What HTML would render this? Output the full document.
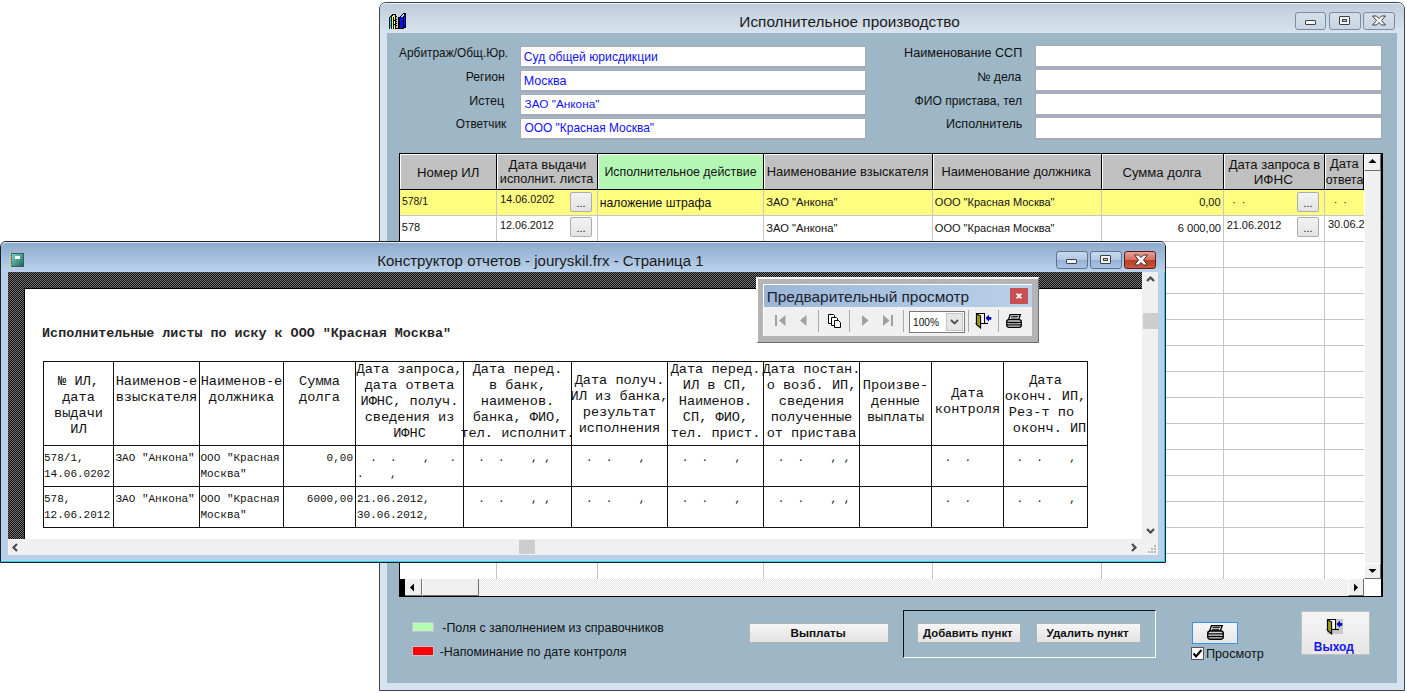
<!DOCTYPE html><html><head><meta charset="utf-8"><style>*{margin:0;padding:0;box-sizing:border-box}
html,body{width:1407px;height:693px;overflow:hidden;background:#fff;font-family:"Liberation Sans",sans-serif;position:relative}
.a{position:absolute}
.t{position:absolute;white-space:nowrap}
.hatch{background:repeating-conic-gradient(#0a0a0a 0 25%,#787878 0 50%) 0 0/2px 2px}
</style></head><body>
<div class="a" style="left:379px;top:2px;width:1026px;height:689px;border:1px solid #3d4650;border-radius:7px 7px 0 0;background:#d3dfeb;"></div>
<div class="a" style="left:380px;top:3px;width:1024px;height:30px;border-radius:6px 6px 0 0;background:linear-gradient(#bfcedc,#d7e3ee);border-top:1px solid #e6edf4;"></div>
<div class="a" style="left:380px;top:33px;width:1024px;height:657px;background:#d6e3ef;"></div>
<div class="a" style="left:387px;top:33px;width:1010px;height:650px;background:#9db7c6;"></div>
<svg class="a" style="left:388px;top:12px" width="18" height="18" viewBox="0 0 18 18" shape-rendering="crispEdges"><rect x="1" y="5" width="1" height="12" fill="#000"/><rect x="2" y="5" width="1" height="11" fill="#00e8ff"/><rect x="3" y="4" width="1" height="13" fill="#000"/><rect x="4" y="4" width="1" height="12" fill="#ffff00"/><rect x="5" y="3" width="1" height="2" fill="#ffff00"/><rect x="2" y="4" width="1" height="1" fill="#000"/><rect x="3" y="3" width="2" height="1" fill="#000"/><rect x="4" y="2" width="2" height="1" fill="#000"/><rect x="5" y="5" width="1" height="12" fill="#000"/><rect x="6" y="2" width="2" height="1" fill="#000"/><rect x="6" y="5" width="1" height="11" fill="#e8e8e8"/><rect x="6" y="8" width="1" height="1" fill="#000"/><rect x="6" y="12" width="1" height="1" fill="#000"/><rect x="7" y="3" width="1" height="14" fill="#000"/><rect x="8" y="4" width="1" height="1" fill="#000"/><rect x="8" y="5" width="2" height="11" fill="#c8c8c8"/><rect x="8" y="7" width="1" height="1" fill="#000"/><rect x="8" y="9" width="1" height="1" fill="#000"/><rect x="8" y="11" width="1" height="1" fill="#000"/><rect x="8" y="13" width="1" height="1" fill="#000"/><rect x="10" y="5" width="1" height="12" fill="#000"/><rect x="8" y="16" width="3" height="1" fill="#000"/><rect x="11" y="5" width="1" height="12" fill="#000"/><rect x="12" y="5" width="3" height="11" fill="#0010f0"/><rect x="12" y="4" width="1" height="1" fill="#000"/><rect x="13" y="3" width="1" height="1" fill="#000"/><rect x="14" y="2" width="1" height="1" fill="#000"/><rect x="15" y="1" width="1" height="1" fill="#000"/><rect x="13" y="4" width="3" height="1" fill="#d8d8d8"/><rect x="14" y="3" width="2" height="1" fill="#d8d8d8"/><rect x="15" y="4" width="1" height="12" fill="#000"/><rect x="16" y="2" width="1" height="13" fill="#0010f0"/><rect x="17" y="1" width="1" height="15" fill="#000"/><rect x="16" y="1" width="1" height="1" fill="#000"/><rect x="11" y="16" width="5" height="1" fill="#000"/><rect x="15" y="15" width="2" height="1" fill="#000"/></svg>
<div class="t" style="left:739.37px;top:14.23px;font-family:'Liberation Sans',sans-serif;font-size:15.37px;color:#1b1b1b;font-weight:normal;line-height:1;">Исполнительное производство</div>
<div class="a" style="left:1295px;top:12px;width:31px;height:18px;border:1px solid #7d8ba0;border-radius:3px;background:linear-gradient(#d4dfe9,#c8d6e3);"></div>
<div class="a" style="left:1329px;top:12px;width:32px;height:18px;border:1px solid #7d8ba0;border-radius:3px;background:linear-gradient(#d4dfe9,#c8d6e3);"></div>
<div class="a" style="left:1363px;top:12px;width:32px;height:18px;border:1px solid #7d8ba0;border-radius:3px;background:linear-gradient(#d4dfe9,#c8d6e3);"></div>
<div class="a" style="left:1305px;top:20px;width:11px;height:5px;background:#f4f4f0;border:1px solid #3a3f48;border-radius:1px;"></div>
<div class="a" style="left:1339px;top:16px;width:11px;height:9px;background:#f4f4f0;border:1px solid #3a3f48;border-radius:1px;"></div>
<div class="a" style="left:1342px;top:19px;width:5px;height:3px;background:#c8d4e0;border:1px solid #3a3f48;"></div>
<svg class="a" style="left:1371px;top:15px" width="16" height="11" viewBox="0 0 16 11"><path d="M1.5 1 L5.5 1 L8 3.5 L10.5 1 L14.5 1 L10.5 5.5 L14.5 10 L10.5 10 L8 7.5 L5.5 10 L1.5 10 L5.5 5.5Z" fill="#f4f4f0" stroke="#3a3f48" stroke-width="1"/></svg>
<div class="a" style="left:520px;top:46px;width:346px;height:22px;background:#fff;border:1px solid #aaa8b4;border-bottom-width:2px;"></div>
<div class="t" style="left:399.00px;top:48.47px;font-family:'Liberation Sans',sans-serif;font-size:11.92px;color:#111;font-weight:normal;line-height:1;">Арбитраж/Общ.Юр.</div>
<div class="t" style="left:523.79px;top:50.96px;font-family:'Liberation Sans',sans-serif;font-size:12.17px;color:#1212f5;font-weight:normal;line-height:1;">Суд общей юрисдикции</div>
<div class="a" style="left:520px;top:70px;width:346px;height:22px;background:#fff;border:1px solid #aaa8b4;border-bottom-width:2px;"></div>
<div class="t" style="left:465.72px;top:71.14px;font-family:'Liberation Sans',sans-serif;font-size:12.19px;color:#111;font-weight:normal;line-height:1;">Регион</div>
<div class="t" style="left:523.70px;top:74.66px;font-family:'Liberation Sans',sans-serif;font-size:12.52px;color:#1212f5;font-weight:normal;line-height:1;">Москва</div>
<div class="a" style="left:520px;top:94px;width:346px;height:22px;background:#fff;border:1px solid #aaa8b4;border-bottom-width:2px;"></div>
<div class="t" style="left:469.20px;top:95.39px;font-family:'Liberation Sans',sans-serif;font-size:12.48px;color:#111;font-weight:normal;line-height:1;">Истец</div>
<div class="t" style="left:524.55px;top:99.37px;font-family:'Liberation Sans',sans-serif;font-size:11.80px;color:#1212f5;font-weight:normal;line-height:1;">ЗАО "Анкона"</div>
<div class="a" style="left:520px;top:118px;width:346px;height:22px;background:#fff;border:1px solid #aaa8b4;border-bottom-width:2px;"></div>
<div class="t" style="left:455.83px;top:119.22px;font-family:'Liberation Sans',sans-serif;font-size:11.85px;color:#111;font-weight:normal;line-height:1;">Ответчик</div>
<div class="t" style="left:524.42px;top:123.15px;font-family:'Liberation Sans',sans-serif;font-size:11.94px;color:#1212f5;font-weight:normal;line-height:1;">ООО "Красная Москва"</div>
<div class="a" style="left:1035px;top:45px;width:347px;height:23px;background:#fff;border:1px solid #aaa8b4;border-bottom-width:2px;"></div>
<div class="t" style="left:904.09px;top:46.78px;font-family:'Liberation Sans',sans-serif;font-size:12.61px;color:#111;font-weight:normal;line-height:1;">Наименование ССП</div>
<div class="a" style="left:1035px;top:69px;width:347px;height:23px;background:#fff;border:1px solid #aaa8b4;border-bottom-width:2px;"></div>
<div class="t" style="left:977.30px;top:70.91px;font-family:'Liberation Sans',sans-serif;font-size:12.22px;color:#111;font-weight:normal;line-height:1;">№ дела</div>
<div class="a" style="left:1035px;top:93px;width:347px;height:23px;background:#fff;border:1px solid #aaa8b4;border-bottom-width:2px;"></div>
<div class="t" style="left:914.59px;top:94.81px;font-family:'Liberation Sans',sans-serif;font-size:12.10px;color:#111;font-weight:normal;line-height:1;">ФИО пристава, тел</div>
<div class="a" style="left:1035px;top:117px;width:347px;height:23px;background:#fff;border:1px solid #aaa8b4;border-bottom-width:2px;"></div>
<div class="t" style="left:945.99px;top:118.07px;font-family:'Liberation Sans',sans-serif;font-size:12.62px;color:#111;font-weight:normal;line-height:1;">Исполнитель</div>
<div class="a" style="left:399px;top:153px;width:984px;height:444px;background:#000;"></div>
<div class="a" style="left:400px;top:154px;width:981px;height:442px;background:#fff;"></div>
<div class="a" style="left:400px;top:190px;width:964px;height:25px;background:#fffd80;"></div>
<div class="a" style="left:400px;top:215px;width:964px;height:1px;background:#c6c6c6;"></div>
<div class="a" style="left:400px;top:241px;width:964px;height:1px;background:#c6c6c6;"></div>
<div class="a" style="left:400px;top:267px;width:964px;height:1px;background:#c6c6c6;"></div>
<div class="a" style="left:400px;top:293px;width:964px;height:1px;background:#c6c6c6;"></div>
<div class="a" style="left:400px;top:319px;width:964px;height:1px;background:#c6c6c6;"></div>
<div class="a" style="left:400px;top:345px;width:964px;height:1px;background:#c6c6c6;"></div>
<div class="a" style="left:400px;top:371px;width:964px;height:1px;background:#c6c6c6;"></div>
<div class="a" style="left:400px;top:397px;width:964px;height:1px;background:#c6c6c6;"></div>
<div class="a" style="left:400px;top:423px;width:964px;height:1px;background:#c6c6c6;"></div>
<div class="a" style="left:400px;top:449px;width:964px;height:1px;background:#c6c6c6;"></div>
<div class="a" style="left:400px;top:475px;width:964px;height:1px;background:#c6c6c6;"></div>
<div class="a" style="left:400px;top:501px;width:964px;height:1px;background:#c6c6c6;"></div>
<div class="a" style="left:400px;top:527px;width:964px;height:1px;background:#c6c6c6;"></div>
<div class="a" style="left:400px;top:553px;width:964px;height:1px;background:#c6c6c6;"></div>
<div class="a" style="left:496px;top:190px;width:1px;height:389px;background:#c6c6c6;"></div>
<div class="a" style="left:597px;top:190px;width:1px;height:389px;background:#c6c6c6;"></div>
<div class="a" style="left:763px;top:190px;width:1px;height:389px;background:#c6c6c6;"></div>
<div class="a" style="left:932px;top:190px;width:1px;height:389px;background:#c6c6c6;"></div>
<div class="a" style="left:1101px;top:190px;width:1px;height:389px;background:#c6c6c6;"></div>
<div class="a" style="left:1223px;top:190px;width:1px;height:389px;background:#c6c6c6;"></div>
<div class="a" style="left:1324px;top:190px;width:1px;height:389px;background:#c6c6c6;"></div>
<div class="a" style="left:400px;top:154px;width:96px;height:35px;background:#c0c0c0;border-top:1px solid #fff;border-left:1px solid #fff;"></div>
<div class="a" style="left:496px;top:154px;width:1px;height:35px;background:#000;"></div>
<div class="a" style="left:497px;top:154px;width:100px;height:35px;background:#c0c0c0;border-top:1px solid #fff;border-left:1px solid #fff;"></div>
<div class="a" style="left:597px;top:154px;width:1px;height:35px;background:#000;"></div>
<div class="a" style="left:598px;top:154px;width:165px;height:35px;background:#b4f7b4;border-top:1px solid #fff;border-left:1px solid #fff;"></div>
<div class="a" style="left:763px;top:154px;width:1px;height:35px;background:#000;"></div>
<div class="a" style="left:764px;top:154px;width:168px;height:35px;background:#c0c0c0;border-top:1px solid #fff;border-left:1px solid #fff;"></div>
<div class="a" style="left:932px;top:154px;width:1px;height:35px;background:#000;"></div>
<div class="a" style="left:933px;top:154px;width:168px;height:35px;background:#c0c0c0;border-top:1px solid #fff;border-left:1px solid #fff;"></div>
<div class="a" style="left:1101px;top:154px;width:1px;height:35px;background:#000;"></div>
<div class="a" style="left:1102px;top:154px;width:121px;height:35px;background:#c0c0c0;border-top:1px solid #fff;border-left:1px solid #fff;"></div>
<div class="a" style="left:1223px;top:154px;width:1px;height:35px;background:#000;"></div>
<div class="a" style="left:1224px;top:154px;width:100px;height:35px;background:#c0c0c0;border-top:1px solid #fff;border-left:1px solid #fff;"></div>
<div class="a" style="left:1324px;top:154px;width:1px;height:35px;background:#000;"></div>
<div class="a" style="left:1325px;top:154px;width:38px;height:35px;background:#c0c0c0;border-top:1px solid #fff;border-left:1px solid #fff;"></div>
<div class="a" style="left:1363px;top:154px;width:1px;height:35px;background:#000;"></div>
<div class="a" style="left:400px;top:189px;width:964px;height:1px;background:#000;"></div>
<div class="t" style="left:417.05px;top:165.61px;font-family:'Liberation Sans',sans-serif;font-size:13.16px;color:#111;font-weight:normal;line-height:1;">Номер ИЛ</div>
<div class="t" style="left:508.50px;top:157.65px;font-family:'Liberation Sans',sans-serif;font-size:13.12px;color:#111;font-weight:normal;line-height:1;">Дата выдачи</div>
<div class="t" style="left:499.84px;top:172.51px;font-family:'Liberation Sans',sans-serif;font-size:12.69px;color:#111;font-weight:normal;line-height:1;">исполнит. листа</div>
<div class="t" style="left:604.41px;top:166.29px;font-family:'Liberation Sans',sans-serif;font-size:12.36px;color:#111;font-weight:normal;line-height:1;">Исполнительное действие</div>
<div class="t" style="left:766.76px;top:165.79px;font-family:'Liberation Sans',sans-serif;font-size:12.95px;color:#111;font-weight:normal;line-height:1;">Наименование взыскателя</div>
<div class="t" style="left:941.48px;top:166.15px;font-family:'Liberation Sans',sans-serif;font-size:12.77px;color:#111;font-weight:normal;line-height:1;">Наименование должника</div>
<div class="t" style="left:1122.44px;top:166.04px;font-family:'Liberation Sans',sans-serif;font-size:13.12px;color:#111;font-weight:normal;line-height:1;">Сумма долга</div>
<div class="t" style="left:1228.80px;top:157.64px;font-family:'Liberation Sans',sans-serif;font-size:13.01px;color:#111;font-weight:normal;line-height:1;">Дата запроса в</div>
<div class="t" style="left:1253.73px;top:172.90px;font-family:'Liberation Sans',sans-serif;font-size:13.41px;color:#111;font-weight:normal;line-height:1;">ИФНС</div>
<div class="t" style="left:1330.10px;top:157.74px;font-family:'Liberation Sans',sans-serif;font-size:12.89px;color:#111;font-weight:normal;line-height:1;">Дата</div>
<div class="t" style="left:1325.70px;top:173.77px;font-family:'Liberation Sans',sans-serif;font-size:12.39px;color:#111;font-weight:normal;line-height:1;">ответа</div>
<div class="t" style="left:401.88px;top:197.30px;font-family:'Liberation Sans',sans-serif;font-size:10.47px;color:#111;font-weight:normal;line-height:1;">578/1</div>
<div class="t" style="left:500.25px;top:194.04px;font-family:'Liberation Sans',sans-serif;font-size:10.78px;color:#111;font-weight:normal;line-height:1;">14.06.0202</div>
<div class="t" style="left:599.77px;top:196.85px;font-family:'Liberation Sans',sans-serif;font-size:12.18px;color:#111;font-weight:normal;line-height:1;">наложение штрафа</div>
<div class="t" style="left:766.26px;top:196.97px;font-family:'Liberation Sans',sans-serif;font-size:11.21px;color:#111;font-weight:normal;line-height:1;">ЗАО "Анкона"</div>
<div class="t" style="left:934.86px;top:196.93px;font-family:'Liberation Sans',sans-serif;font-size:11.03px;color:#111;font-weight:normal;line-height:1;">ООО "Красная Москва"</div>
<div class="t" style="left:1199.17px;top:196.94px;font-family:'Liberation Sans',sans-serif;font-size:11.01px;color:#111;font-weight:normal;line-height:1;">0,00</div>
<div class="t" style="left:1232.2px;top:196.65px;font-family:'Liberation Sans',sans-serif;font-size:11px;color:#111;font-weight:normal;line-height:1;">·</div>
<div class="t" style="left:1241.8px;top:196.65px;font-family:'Liberation Sans',sans-serif;font-size:11px;color:#111;font-weight:normal;line-height:1;">·</div>
<div class="t" style="left:1333.7px;top:196.65px;font-family:'Liberation Sans',sans-serif;font-size:11px;color:#111;font-weight:normal;line-height:1;">·</div>
<div class="t" style="left:1343.3px;top:196.65px;font-family:'Liberation Sans',sans-serif;font-size:11px;color:#111;font-weight:normal;line-height:1;">·</div>
<div class="t" style="left:401.76px;top:222.40px;font-family:'Liberation Sans',sans-serif;font-size:11.05px;color:#111;font-weight:normal;line-height:1;">578</div>
<div class="t" style="left:499.95px;top:219.54px;font-family:'Liberation Sans',sans-serif;font-size:10.78px;color:#111;font-weight:normal;line-height:1;">12.06.2012</div>
<div class="t" style="left:766.26px;top:222.97px;font-family:'Liberation Sans',sans-serif;font-size:11.21px;color:#111;font-weight:normal;line-height:1;">ЗАО "Анкона"</div>
<div class="t" style="left:934.86px;top:222.93px;font-family:'Liberation Sans',sans-serif;font-size:11.03px;color:#111;font-weight:normal;line-height:1;">ООО "Красная Москва"</div>
<div class="t" style="left:1177.64px;top:222.81px;font-family:'Liberation Sans',sans-serif;font-size:11.17px;color:#111;font-weight:normal;line-height:1;">6 000,00</div>
<div class="t" style="left:1226.65px;top:219.50px;font-family:'Liberation Sans',sans-serif;font-size:10.94px;color:#111;font-weight:normal;line-height:1;">21.06.2012</div>
<div class="t" style="left:1328px;top:219.45px;font-family:'Liberation Sans',sans-serif;font-size:11px;color:#111;font-weight:normal;line-height:1;">30.06.2012</div>
<div class="a" style="left:570px;top:192px;width:22px;height:20px;background:linear-gradient(#f3f3f3,#e3e3e3);border:1px solid #adadad;border-radius:2px;"></div>
<div class="t" style="left:81px;width:1000px;text-align:center;top:198.15px;font-family:'Liberation Sans',sans-serif;font-size:11px;color:#111;font-weight:normal;line-height:1;">...</div>
<div class="a" style="left:570px;top:217px;width:22px;height:20px;background:linear-gradient(#f3f3f3,#e3e3e3);border:1px solid #adadad;border-radius:2px;"></div>
<div class="t" style="left:81px;width:1000px;text-align:center;top:223.15px;font-family:'Liberation Sans',sans-serif;font-size:11px;color:#111;font-weight:normal;line-height:1;">...</div>
<div class="a" style="left:1297px;top:192px;width:22px;height:20px;background:linear-gradient(#f3f3f3,#e3e3e3);border:1px solid #adadad;border-radius:2px;"></div>
<div class="t" style="left:808px;width:1000px;text-align:center;top:198.15px;font-family:'Liberation Sans',sans-serif;font-size:11px;color:#111;font-weight:normal;line-height:1;">...</div>
<div class="a" style="left:1297px;top:217px;width:22px;height:20px;background:linear-gradient(#f3f3f3,#e3e3e3);border:1px solid #adadad;border-radius:2px;"></div>
<div class="t" style="left:808px;width:1000px;text-align:center;top:223.15px;font-family:'Liberation Sans',sans-serif;font-size:11px;color:#111;font-weight:normal;line-height:1;">...</div>
<div class="a" style="left:1364px;top:154px;width:17px;height:425px;background:#f0f0f0;border-left:1px solid #fff;"></div>
<div class="a" style="left:1364px;top:154px;width:17px;height:17px;background:#f0f0f0;border-top:1px solid #fff;border-left:1px solid #fff;border-right:1px solid #6e6e6e;border-bottom:1px solid #6e6e6e;"></div>
<div class="a" style="left:1364px;top:563px;width:17px;height:16px;background:#f0f0f0;border-top:1px solid #fff;border-left:1px solid #fff;border-right:1px solid #6e6e6e;border-bottom:1px solid #6e6e6e;"></div>
<div class="a" style="left:1380px;top:171px;width:1px;height:392px;background:#a0a0a0;"></div>
<svg class="a" style="left:1368px;top:158px" width="9" height="6"><path d="M0.5 5 L4.5 1 L8.5 5Z" fill="#000"/></svg>
<svg class="a" style="left:1368px;top:568px" width="9" height="6"><path d="M0.5 1 L4.5 5 L8.5 1Z" fill="#000"/></svg>
<div class="a" style="left:400px;top:579px;width:964px;height:17px;background:repeating-conic-gradient(#fdfdfd 0 25%,#e6e6e6 0 50%) 0 0/2px 2px"></div>
<div class="a" style="left:400px;top:579px;width:5px;height:17px;background:#000;"></div>
<div class="a" style="left:405px;top:579px;width:17px;height:17px;background:#f0f0f0;border-right:1px solid #6e6e6e;border-bottom:1px solid #6e6e6e;"></div>
<svg class="a" style="left:409px;top:583px" width="6" height="9"><path d="M5 0.5 L1 4.5 L5 8.5Z" fill="#000"/></svg>
<div class="a" style="left:422px;top:579px;width:57px;height:17px;background:#efefef;border-right:1px solid #6e6e6e;border-bottom:1px solid #6e6e6e;border-left:1px solid #fff;"></div>
<div class="a" style="left:1348px;top:579px;width:16px;height:17px;background:#f0f0f0;border-right:1px solid #6e6e6e;border-bottom:1px solid #6e6e6e;border-left:1px solid #fff;"></div>
<svg class="a" style="left:1353px;top:583px" width="6" height="9"><path d="M1 0.5 L5 4.5 L1 8.5Z" fill="#000"/></svg>
<div class="a" style="left:1364px;top:579px;width:17px;height:17px;background:#fff;"></div>
<div class="a" style="left:412px;top:622px;width:22px;height:10px;background:#b3ffb3;border:1px solid #c7bfd3;"></div>
<div class="a" style="left:412px;top:646px;width:22px;height:10px;background:#ff0000;border:1px solid #c7bfd3;"></div>
<div class="t" style="left:442.30px;top:621.95px;font-family:'Liberation Sans',sans-serif;font-size:12.41px;color:#111;font-weight:normal;line-height:1;">-Поля с заполнением из справочников</div>
<div class="t" style="left:439.70px;top:645.53px;font-family:'Liberation Sans',sans-serif;font-size:12.44px;color:#111;font-weight:normal;line-height:1;">-Напоминание по дате контроля</div>
<div class="a" style="left:749px;top:623px;width:140px;height:20px;background:linear-gradient(#f5f5f5,#e3e3e3);border:1px solid #b4b4b4;border-radius:1px;"></div>
<div class="t" style="left:790.50px;top:627.34px;font-family:'Liberation Sans',sans-serif;font-size:11.72px;color:#111;font-weight:bold;line-height:1;">Выплаты</div>
<div class="a" style="left:903px;top:610px;width:253px;height:48px;border-top:1px solid #111;border-left:1px solid #111;border-right:1px solid #fff;border-bottom:1px solid #fff;"></div>
<div class="a" style="left:917px;top:623px;width:104px;height:20px;background:linear-gradient(#f5f5f5,#e3e3e3);border:1px solid #b4b4b4;border-radius:1px;"></div>
<div class="t" style="left:923.10px;top:627.83px;font-family:'Liberation Sans',sans-serif;font-size:11.38px;color:#111;font-weight:bold;line-height:1;">Добавить пункт</div>
<div class="a" style="left:1036px;top:623px;width:105px;height:20px;background:linear-gradient(#f5f5f5,#e3e3e3);border:1px solid #b4b4b4;border-radius:1px;"></div>
<div class="t" style="left:1046.60px;top:627.82px;font-family:'Liberation Sans',sans-serif;font-size:11.51px;color:#111;font-weight:bold;line-height:1;">Удалить пункт</div>
<div class="a" style="left:1192px;top:622px;width:46px;height:22px;background:linear-gradient(#f5f5f5,#e6e6e6);border:1px solid #3c8fe6;"></div>
<svg class="a" style="left:1207px;top:625px" width="17" height="15" viewBox="0 0 16 14"><path d="M4.2 0.7 H14.3 L12.6 5.6 H2.5Z" fill="#fff" stroke="#000" stroke-width="1.3"/><path d="M5.3 2.4 H12.2 M4.6 4.0 H11.6" stroke="#000" stroke-width="0.9"/><rect x="0.7" y="5.6" width="14.6" height="7.7" rx="2.2" fill="#d8d8d8" stroke="#000" stroke-width="1.3"/><path d="M1 8.3 H15 M1 10.9 H15" stroke="#000" stroke-width="1.2"/><path d="M3 9.6 H13" stroke="#9a9a9a" stroke-width="1.2"/></svg>
<div class="a" style="left:1191px;top:647px;width:13px;height:13px;background:#fff;border:1px solid #555;"></div>
<svg class="a" style="left:1192px;top:648px" width="11" height="11"><path d="M1.5 5.5 L4 8.5 L9.5 2" fill="none" stroke="#000" stroke-width="2"/></svg>
<div class="t" style="left:1205.99px;top:648.03px;font-family:'Liberation Sans',sans-serif;font-size:12.67px;color:#111;font-weight:normal;line-height:1;">Просмотр</div>
<div class="a" style="left:1301px;top:611px;width:69px;height:44px;background:linear-gradient(#f5f5f5,#e6e6e6);border:1px solid #c0c0c0;"></div>
<svg class="a" style="left:1326px;top:619px" width="17" height="16" viewBox="0 0 17 16"><rect x="1" y="0" width="16" height="15" fill="#c8c8c8"/><path d="M1.5 10.5 V0.5 H9.5 V10.5" fill="#fff" stroke="#000" stroke-width="1.1"/><path d="M0.5 10.5 H13" stroke="#000" stroke-width="1.1"/><path d="M1.5 0.8 L5.6 3 V15 L1.5 11.5Z" fill="#9c9c12" stroke="#000" stroke-width="1.1"/><path d="M10.5 5 L14 1.8 V4 H16.3 V6.8 H14 V8.8Z" fill="#0000b8"/></svg>
<div class="t" style="left:1313.78px;top:640.90px;font-family:'Liberation Sans',sans-serif;font-size:12.01px;color:#1414f0;font-weight:bold;line-height:1;">Выход</div>
<div class="a" style="left:0px;top:241px;width:1166px;height:322px;border:1px solid #1a1f26;border-radius:6px 6px 0 0;background:#b8d0ea;overflow:hidden;"></div>
<div class="a" style="left:1px;top:242px;width:1164px;height:30px;border-radius:5px 5px 0 0;background:linear-gradient(#8eaacb,#bbd4ed);border-top:1px solid #dfe9f3;"></div>
<div class="a" style="left:1px;top:555px;width:1164px;height:7px;background:#b8d0ea;border-bottom:1px solid #2ad0f0;"></div>
<div class="a" style="left:1164px;top:272px;width:1px;height:290px;background:#2ad0f0;"></div>
<svg class="a" style="left:10px;top:252px" width="15" height="16" viewBox="0 0 15 16">
<rect x="1.5" y="1.5" width="12" height="13" fill="#2d8f8a" stroke="#3c5a58" stroke-width="1"/>
<rect x="2" y="2" width="11" height="12" fill="url(#rg)"/>
<defs><linearGradient id="rg" x1="0" y1="0" x2="1" y2="1"><stop offset="0" stop-color="#7fd0c6"/><stop offset="1" stop-color="#176a66"/></linearGradient></defs>
<rect x="5" y="4" width="5" height="3" fill="#fff"/>
<path d="M1 2 V15" stroke="#e8e000" stroke-width="1" stroke-dasharray="1 1"/>
</svg>
<div class="t" style="left:377.20px;top:253.31px;font-family:'Liberation Sans',sans-serif;font-size:15.05px;color:#1b1b1b;font-weight:normal;line-height:1;">Конструктор отчетов - jouryskil.frx - Страница 1</div>
<div class="a" style="left:1056px;top:251px;width:32px;height:18px;border:1px solid #5c7493;border-radius:3px;background:linear-gradient(#c8daee 0%,#b0c8e3 50%,#95b2d6 51%,#a9c4e3 100%);"></div>
<div class="a" style="left:1090px;top:251px;width:32px;height:18px;border:1px solid #5c7493;border-radius:3px;background:linear-gradient(#c8daee 0%,#b0c8e3 50%,#95b2d6 51%,#a9c4e3 100%);"></div>
<div class="a" style="left:1124px;top:251px;width:32px;height:18px;border:1px solid #5a1d1d;border-radius:3px;background:linear-gradient(#e8a195 0%,#d4705f 50%,#b73d25 51%,#d0553e 100%);"></div>
<div class="a" style="left:1066px;top:259px;width:11px;height:5px;background:#f4f4f0;border:1px solid #3a3f48;border-radius:1px;"></div>
<div class="a" style="left:1100px;top:255px;width:11px;height:9px;background:#f4f4f0;border:1px solid #3a3f48;border-radius:1px;"></div>
<div class="a" style="left:1103px;top:258px;width:5px;height:3px;background:#bcd0e8;border:1px solid #3a3f48;"></div>
<svg class="a" style="left:1133px;top:254px" width="16" height="12" viewBox="0 0 16 12"><path d="M1.5 1 L5.5 1 L8 3.5 L10.5 1 L14.5 1 L10.5 6 L14.5 11 L10.5 11 L8 8.5 L5.5 11 L1.5 11 L5.5 6Z" fill="#f6f6f6" stroke="#3d2a30" stroke-width="1"/></svg>
<div class="a hatch" style="left:8px;top:272px;width:1134px;height:267px"></div>
<div class="a" style="left:24px;top:288px;width:1118px;height:1px;background:#000;"></div>
<div class="a" style="left:24px;top:288px;width:1px;height:251px;background:#000;"></div>
<div class="a" style="left:25px;top:289px;width:1117px;height:250px;background:#fff;"></div>
<div class="a" style="left:1142px;top:272px;width:16px;height:267px;background:#f0f0f0;"></div>
<div class="a" style="left:1143px;top:313px;width:15px;height:16px;background:#cdcdcd;"></div>
<svg class="a" style="left:1146px;top:276px" width="9" height="6"><path d="M1 5 L4.5 1.5 L8 5" fill="none" stroke="#4a4a4a" stroke-width="2.2"/></svg>
<svg class="a" style="left:1146px;top:528px" width="9" height="6"><path d="M1 1 L4.5 4.5 L8 1" fill="none" stroke="#4a4a4a" stroke-width="2.2"/></svg>
<div class="a" style="left:8px;top:539px;width:1150px;height:16px;background:#f0f0f0;"></div>
<div class="a" style="left:519px;top:540px;width:16px;height:14px;background:#cdcdcd;"></div>
<svg class="a" style="left:12px;top:543px" width="6" height="9"><path d="M5 1 L1.5 4.5 L5 8" fill="none" stroke="#4a4a4a" stroke-width="2.2"/></svg>
<svg class="a" style="left:1131px;top:543px" width="6" height="9"><path d="M1 1 L4.5 4.5 L1 8" fill="none" stroke="#4a4a4a" stroke-width="2.2"/></svg>
<svg class="a" style="left:1148px;top:545px" width="9" height="9"><g fill="#b8b8b8"><rect x="6" y="0" width="2" height="2"/><rect x="3" y="3" width="2" height="2"/><rect x="6" y="3" width="2" height="2"/><rect x="0" y="6" width="2" height="2"/><rect x="3" y="6" width="2" height="2"/><rect x="6" y="6" width="2" height="2"/></g></svg>
<div class="t" style="left:42.10px;top:327.24px;font-family:'Liberation Mono',monospace;font-size:13.37px;color:#262626;font-weight:bold;line-height:1;">Исполнительные листы по иску к ООО "Красная Москва"</div>
<div class="a" style="left:43px;top:361px;width:1045px;height:1px;background:#111;"></div>
<div class="a" style="left:43px;top:445px;width:1045px;height:1px;background:#111;"></div>
<div class="a" style="left:43px;top:486px;width:1045px;height:1px;background:#111;"></div>
<div class="a" style="left:43px;top:527px;width:1045px;height:1px;background:#111;"></div>
<div class="a" style="left:43px;top:361px;width:1px;height:167px;background:#111;"></div>
<div class="a" style="left:113px;top:361px;width:1px;height:167px;background:#111;"></div>
<div class="a" style="left:199px;top:361px;width:1px;height:167px;background:#111;"></div>
<div class="a" style="left:283px;top:361px;width:1px;height:167px;background:#111;"></div>
<div class="a" style="left:355px;top:361px;width:1px;height:167px;background:#111;"></div>
<div class="a" style="left:463px;top:361px;width:1px;height:167px;background:#111;"></div>
<div class="a" style="left:571px;top:361px;width:1px;height:167px;background:#111;"></div>
<div class="a" style="left:667px;top:361px;width:1px;height:167px;background:#111;"></div>
<div class="a" style="left:763px;top:361px;width:1px;height:167px;background:#111;"></div>
<div class="a" style="left:859px;top:361px;width:1px;height:167px;background:#111;"></div>
<div class="a" style="left:931px;top:361px;width:1px;height:167px;background:#111;"></div>
<div class="a" style="left:1003px;top:361px;width:1px;height:167px;background:#111;"></div>
<div class="a" style="left:1087px;top:361px;width:1px;height:167px;background:#111;"></div>
<div class="t" style="left:-421.5px;width:1000px;text-align:center;top:374.86px;font-family:'Liberation Mono',monospace;font-size:13.6px;color:#111;font-weight:normal;line-height:1;">№&nbsp;ИЛ,</div>
<div class="t" style="left:-421.5px;width:1000px;text-align:center;top:390.76px;font-family:'Liberation Mono',monospace;font-size:13.6px;color:#111;font-weight:normal;line-height:1;">дата</div>
<div class="t" style="left:-421.5px;width:1000px;text-align:center;top:406.66px;font-family:'Liberation Mono',monospace;font-size:13.6px;color:#111;font-weight:normal;line-height:1;">выдачи</div>
<div class="t" style="left:-421.5px;width:1000px;text-align:center;top:422.56px;font-family:'Liberation Mono',monospace;font-size:13.6px;color:#111;font-weight:normal;line-height:1;">ИЛ</div>
<div class="t" style="left:-343.5px;width:1000px;text-align:center;top:374.76px;font-family:'Liberation Mono',monospace;font-size:13.6px;color:#111;font-weight:normal;line-height:1;">Наименов-е</div>
<div class="t" style="left:-343.5px;width:1000px;text-align:center;top:390.66px;font-family:'Liberation Mono',monospace;font-size:13.6px;color:#111;font-weight:normal;line-height:1;">взыскателя</div>
<div class="t" style="left:-258.5px;width:1000px;text-align:center;top:374.76px;font-family:'Liberation Mono',monospace;font-size:13.6px;color:#111;font-weight:normal;line-height:1;">Наименов-е</div>
<div class="t" style="left:-258.5px;width:1000px;text-align:center;top:390.66px;font-family:'Liberation Mono',monospace;font-size:13.6px;color:#111;font-weight:normal;line-height:1;">должника</div>
<div class="t" style="left:-180.5px;width:1000px;text-align:center;top:374.76px;font-family:'Liberation Mono',monospace;font-size:13.6px;color:#111;font-weight:normal;line-height:1;">Сумма</div>
<div class="t" style="left:-180.5px;width:1000px;text-align:center;top:390.66px;font-family:'Liberation Mono',monospace;font-size:13.6px;color:#111;font-weight:normal;line-height:1;">долга</div>
<div class="t" style="left:-90.5px;width:1000px;text-align:center;top:362.96px;font-family:'Liberation Mono',monospace;font-size:13.6px;color:#111;font-weight:normal;line-height:1;">Дата&nbsp;запроса,</div>
<div class="t" style="left:-90.5px;width:1000px;text-align:center;top:378.86px;font-family:'Liberation Mono',monospace;font-size:13.6px;color:#111;font-weight:normal;line-height:1;">дата&nbsp;ответа</div>
<div class="t" style="left:-90.5px;width:1000px;text-align:center;top:394.76px;font-family:'Liberation Mono',monospace;font-size:13.6px;color:#111;font-weight:normal;line-height:1;">ИФНС,&nbsp;получ.</div>
<div class="t" style="left:-90.5px;width:1000px;text-align:center;top:410.66px;font-family:'Liberation Mono',monospace;font-size:13.6px;color:#111;font-weight:normal;line-height:1;">сведения&nbsp;из</div>
<div class="t" style="left:-90.5px;width:1000px;text-align:center;top:426.56px;font-family:'Liberation Mono',monospace;font-size:13.6px;color:#111;font-weight:normal;line-height:1;">ИФНС</div>
<div class="t" style="left:17.5px;width:1000px;text-align:center;top:362.96px;font-family:'Liberation Mono',monospace;font-size:13.6px;color:#111;font-weight:normal;line-height:1;">Дата&nbsp;перед.</div>
<div class="t" style="left:17.5px;width:1000px;text-align:center;top:378.86px;font-family:'Liberation Mono',monospace;font-size:13.6px;color:#111;font-weight:normal;line-height:1;">в&nbsp;банк,</div>
<div class="t" style="left:17.5px;width:1000px;text-align:center;top:394.76px;font-family:'Liberation Mono',monospace;font-size:13.6px;color:#111;font-weight:normal;line-height:1;">наименов.</div>
<div class="t" style="left:17.5px;width:1000px;text-align:center;top:410.66px;font-family:'Liberation Mono',monospace;font-size:13.6px;color:#111;font-weight:normal;line-height:1;">банка,&nbsp;ФИО,</div>
<div class="t" style="left:17.5px;width:1000px;text-align:center;top:426.56px;font-family:'Liberation Mono',monospace;font-size:13.6px;color:#111;font-weight:normal;line-height:1;">тел.&nbsp;исполнит.</div>
<div class="t" style="left:119.5px;width:1000px;text-align:center;top:374.46px;font-family:'Liberation Mono',monospace;font-size:13.6px;color:#111;font-weight:normal;line-height:1;">Дата&nbsp;получ.</div>
<div class="t" style="left:119.5px;width:1000px;text-align:center;top:390.36px;font-family:'Liberation Mono',monospace;font-size:13.6px;color:#111;font-weight:normal;line-height:1;">ИЛ&nbsp;из&nbsp;банка,</div>
<div class="t" style="left:119.5px;width:1000px;text-align:center;top:406.26px;font-family:'Liberation Mono',monospace;font-size:13.6px;color:#111;font-weight:normal;line-height:1;">результат</div>
<div class="t" style="left:119.5px;width:1000px;text-align:center;top:422.16px;font-family:'Liberation Mono',monospace;font-size:13.6px;color:#111;font-weight:normal;line-height:1;">исполнения</div>
<div class="t" style="left:215.5px;width:1000px;text-align:center;top:362.96px;font-family:'Liberation Mono',monospace;font-size:13.6px;color:#111;font-weight:normal;line-height:1;">Дата&nbsp;перед.</div>
<div class="t" style="left:215.5px;width:1000px;text-align:center;top:378.86px;font-family:'Liberation Mono',monospace;font-size:13.6px;color:#111;font-weight:normal;line-height:1;">ИЛ&nbsp;в&nbsp;СП,</div>
<div class="t" style="left:215.5px;width:1000px;text-align:center;top:394.76px;font-family:'Liberation Mono',monospace;font-size:13.6px;color:#111;font-weight:normal;line-height:1;">Наименов.</div>
<div class="t" style="left:215.5px;width:1000px;text-align:center;top:410.66px;font-family:'Liberation Mono',monospace;font-size:13.6px;color:#111;font-weight:normal;line-height:1;">СП,&nbsp;ФИО,</div>
<div class="t" style="left:215.5px;width:1000px;text-align:center;top:426.56px;font-family:'Liberation Mono',monospace;font-size:13.6px;color:#111;font-weight:normal;line-height:1;">тел.&nbsp;прист.</div>
<div class="t" style="left:311.5px;width:1000px;text-align:center;top:362.96px;font-family:'Liberation Mono',monospace;font-size:13.6px;color:#111;font-weight:normal;line-height:1;">Дата&nbsp;постан.</div>
<div class="t" style="left:311.5px;width:1000px;text-align:center;top:378.86px;font-family:'Liberation Mono',monospace;font-size:13.6px;color:#111;font-weight:normal;line-height:1;">о&nbsp;возб.&nbsp;ИП,</div>
<div class="t" style="left:311.5px;width:1000px;text-align:center;top:394.76px;font-family:'Liberation Mono',monospace;font-size:13.6px;color:#111;font-weight:normal;line-height:1;">сведения</div>
<div class="t" style="left:311.5px;width:1000px;text-align:center;top:410.66px;font-family:'Liberation Mono',monospace;font-size:13.6px;color:#111;font-weight:normal;line-height:1;">полученные</div>
<div class="t" style="left:311.5px;width:1000px;text-align:center;top:426.56px;font-family:'Liberation Mono',monospace;font-size:13.6px;color:#111;font-weight:normal;line-height:1;">от&nbsp;пристава</div>
<div class="t" style="left:395.5px;width:1000px;text-align:center;top:379.26px;font-family:'Liberation Mono',monospace;font-size:13.6px;color:#111;font-weight:normal;line-height:1;">Произве-</div>
<div class="t" style="left:395.5px;width:1000px;text-align:center;top:395.16px;font-family:'Liberation Mono',monospace;font-size:13.6px;color:#111;font-weight:normal;line-height:1;">денные</div>
<div class="t" style="left:395.5px;width:1000px;text-align:center;top:411.06px;font-family:'Liberation Mono',monospace;font-size:13.6px;color:#111;font-weight:normal;line-height:1;">выплаты</div>
<div class="t" style="left:467.5px;width:1000px;text-align:center;top:386.86px;font-family:'Liberation Mono',monospace;font-size:13.6px;color:#111;font-weight:normal;line-height:1;">Дата</div>
<div class="t" style="left:467.5px;width:1000px;text-align:center;top:402.76px;font-family:'Liberation Mono',monospace;font-size:13.6px;color:#111;font-weight:normal;line-height:1;">контроля</div>
<div class="t" style="left:545.5px;width:1000px;text-align:center;top:374.16px;font-family:'Liberation Mono',monospace;font-size:13.6px;color:#111;font-weight:normal;line-height:1;">Дата</div>
<div class="t" style="left:545.5px;width:1000px;text-align:center;top:390.06px;font-family:'Liberation Mono',monospace;font-size:13.6px;color:#111;font-weight:normal;line-height:1;">оконч.&nbsp;ИП,</div>
<div class="t" style="left:545.5px;width:1000px;text-align:center;top:405.96px;font-family:'Liberation Mono',monospace;font-size:13.6px;color:#111;font-weight:normal;line-height:1;">Рез-т&nbsp;по&nbsp;</div>
<div class="t" style="left:545.5px;width:1000px;text-align:center;top:421.86px;font-family:'Liberation Mono',monospace;font-size:13.6px;color:#111;font-weight:normal;line-height:1;">&nbsp;оконч.&nbsp;ИП</div>
<div class="t" style="left:44px;top:453.14px;font-family:'Liberation Mono',monospace;font-size:11px;color:#111;font-weight:normal;line-height:1;">578/1,</div>
<div class="t" style="left:44px;top:469.14px;font-family:'Liberation Mono',monospace;font-size:11px;color:#111;font-weight:normal;line-height:1;">14.06.0202</div>
<div class="t" style="left:44px;top:494.14px;font-family:'Liberation Mono',monospace;font-size:11px;color:#111;font-weight:normal;line-height:1;">578,</div>
<div class="t" style="left:44px;top:510.14px;font-family:'Liberation Mono',monospace;font-size:11px;color:#111;font-weight:normal;line-height:1;">12.06.2012</div>
<div class="t" style="left:115.5px;top:453.14px;font-family:'Liberation Mono',monospace;font-size:11px;color:#111;font-weight:normal;line-height:1;">ЗАО&nbsp;"Анкона"</div>
<div class="t" style="left:115.5px;top:494.14px;font-family:'Liberation Mono',monospace;font-size:11px;color:#111;font-weight:normal;line-height:1;">ЗАО&nbsp;"Анкона"</div>
<div class="t" style="left:200.5px;top:453.14px;font-family:'Liberation Mono',monospace;font-size:11px;color:#111;font-weight:normal;line-height:1;">ООО&nbsp;"Красная</div>
<div class="t" style="left:200.5px;top:469.14px;font-family:'Liberation Mono',monospace;font-size:11px;color:#111;font-weight:normal;line-height:1;">Москва"</div>
<div class="t" style="left:200.5px;top:494.14px;font-family:'Liberation Mono',monospace;font-size:11px;color:#111;font-weight:normal;line-height:1;">ООО&nbsp;"Красная</div>
<div class="t" style="left:200.5px;top:510.14px;font-family:'Liberation Mono',monospace;font-size:11px;color:#111;font-weight:normal;line-height:1;">Москва"</div>
<div class="t" style="left:326.6px;top:453.14px;font-family:'Liberation Mono',monospace;font-size:11px;color:#111;font-weight:normal;line-height:1;">0,00</div>
<div class="t" style="left:306.8px;top:494.14px;font-family:'Liberation Mono',monospace;font-size:11px;color:#111;font-weight:normal;line-height:1;">6000,00</div>
<div class="t" style="left:357px;top:453.14px;font-family:'Liberation Mono',monospace;font-size:11px;color:#111;font-weight:normal;line-height:1;">&nbsp;&nbsp;.&nbsp;&nbsp;.&nbsp;&nbsp;&nbsp;&nbsp;,&nbsp;&nbsp;&nbsp;.</div>
<div class="t" style="left:357px;top:469.14px;font-family:'Liberation Mono',monospace;font-size:11px;color:#111;font-weight:normal;line-height:1;">.&nbsp;&nbsp;&nbsp;&nbsp;,</div>
<div class="t" style="left:357px;top:494.14px;font-family:'Liberation Mono',monospace;font-size:11px;color:#111;font-weight:normal;line-height:1;">21.06.2012,</div>
<div class="t" style="left:357px;top:510.14px;font-family:'Liberation Mono',monospace;font-size:11px;color:#111;font-weight:normal;line-height:1;">30.06.2012,</div>
<div class="t" style="left:465px;top:453.14px;font-family:'Liberation Mono',monospace;font-size:11px;color:#111;font-weight:normal;line-height:1;">&nbsp;&nbsp;.&nbsp;&nbsp;.&nbsp;&nbsp;&nbsp;&nbsp;,&nbsp;,</div>
<div class="t" style="left:572.7px;top:453.14px;font-family:'Liberation Mono',monospace;font-size:11px;color:#111;font-weight:normal;line-height:1;">&nbsp;&nbsp;.&nbsp;&nbsp;.&nbsp;&nbsp;&nbsp;&nbsp;,</div>
<div class="t" style="left:668.6px;top:453.14px;font-family:'Liberation Mono',monospace;font-size:11px;color:#111;font-weight:normal;line-height:1;">&nbsp;&nbsp;.&nbsp;&nbsp;.&nbsp;&nbsp;&nbsp;&nbsp;,</div>
<div class="t" style="left:764.6px;top:453.14px;font-family:'Liberation Mono',monospace;font-size:11px;color:#111;font-weight:normal;line-height:1;">&nbsp;&nbsp;.&nbsp;&nbsp;.&nbsp;&nbsp;&nbsp;&nbsp;,&nbsp;,</div>
<div class="t" style="left:931.5px;top:453.14px;font-family:'Liberation Mono',monospace;font-size:11px;color:#111;font-weight:normal;line-height:1;">&nbsp;&nbsp;.&nbsp;&nbsp;.</div>
<div class="t" style="left:1003.2px;top:453.14px;font-family:'Liberation Mono',monospace;font-size:11px;color:#111;font-weight:normal;line-height:1;">&nbsp;&nbsp;.&nbsp;&nbsp;.&nbsp;&nbsp;&nbsp;&nbsp;,</div>
<div class="t" style="left:465px;top:494.14px;font-family:'Liberation Mono',monospace;font-size:11px;color:#111;font-weight:normal;line-height:1;">&nbsp;&nbsp;.&nbsp;&nbsp;.&nbsp;&nbsp;&nbsp;&nbsp;,&nbsp;,</div>
<div class="t" style="left:572.7px;top:494.14px;font-family:'Liberation Mono',monospace;font-size:11px;color:#111;font-weight:normal;line-height:1;">&nbsp;&nbsp;.&nbsp;&nbsp;.&nbsp;&nbsp;&nbsp;&nbsp;,</div>
<div class="t" style="left:668.6px;top:494.14px;font-family:'Liberation Mono',monospace;font-size:11px;color:#111;font-weight:normal;line-height:1;">&nbsp;&nbsp;.&nbsp;&nbsp;.&nbsp;&nbsp;&nbsp;&nbsp;,</div>
<div class="t" style="left:764.6px;top:494.14px;font-family:'Liberation Mono',monospace;font-size:11px;color:#111;font-weight:normal;line-height:1;">&nbsp;&nbsp;.&nbsp;&nbsp;.&nbsp;&nbsp;&nbsp;&nbsp;,&nbsp;,</div>
<div class="t" style="left:931.5px;top:494.14px;font-family:'Liberation Mono',monospace;font-size:11px;color:#111;font-weight:normal;line-height:1;">&nbsp;&nbsp;.&nbsp;&nbsp;.</div>
<div class="t" style="left:1003.2px;top:494.14px;font-family:'Liberation Mono',monospace;font-size:11px;color:#111;font-weight:normal;line-height:1;">&nbsp;&nbsp;.&nbsp;&nbsp;.&nbsp;&nbsp;&nbsp;&nbsp;,</div>
<div class="a" style="left:756px;top:277px;width:283px;height:66px;background:#b4b4b4;border-top:2px solid #fff;border-left:2px solid #fff;border-right:1px solid #6a6a6a;border-bottom:1px solid #6a6a6a;"></div>
<div class="a" style="left:763px;top:284px;width:269px;height:52px;background:#f0f0f0;border-top:1px solid #fff;border-left:1px solid #fff;"></div>
<div class="a" style="left:764px;top:285px;width:268px;height:22px;background:linear-gradient(90deg,#9cb6d6,#b9d1ea);"></div>
<div class="t" style="left:766.77px;top:289.03px;font-family:'Liberation Sans',sans-serif;font-size:15.38px;color:#1a2330;font-weight:normal;line-height:1;">Предварительный просмотр</div>
<div class="a" style="left:1010px;top:288px;width:18px;height:16px;background:#c75050;"></div>
<svg class="a" style="left:1014px;top:291px" width="10" height="10"><path d="M2.6 2.6 L7.4 7.4 M7.4 2.6 L2.6 7.4" stroke="#fff" stroke-width="1.7"/></svg>
<svg class="a" style="left:770px;top:310px" width="260" height="24" viewBox="770 310 260 24"><rect x="775" y="315" width="2" height="11" fill="#a0a0a0"/><path d="M785.5 315 L779 320.5 L785.5 326Z" fill="#a0a0a0"/><path d="M806.5 315 L800 320.5 L806.5 326Z" fill="#a0a0a0"/><rect x="818" y="310" width="1" height="22" fill="#a8a8a8"/><rect x="849" y="310" width="1" height="22" fill="#a8a8a8"/><path d="M862 315 L868.5 320.5 L862 326Z" fill="#a0a0a0"/><path d="M883 315 L889.5 320.5 L883 326Z" fill="#a0a0a0"/><rect x="891" y="315" width="2" height="11" fill="#a0a0a0"/><rect x="903" y="310" width="1" height="22" fill="#a8a8a8"/><rect x="968" y="310" width="1" height="22" fill="#a8a8a8"/><rect x="998" y="310" width="1" height="22" fill="#a8a8a8"/><path d="M828.5 314.5 H833.5 L834.5 315.5 V323.5 H828.5Z" fill="#fff" stroke="#000"/><path d="M831.5 317.5 H836.5 L837.5 318.5 V325.5 H831.5Z" fill="#fff" stroke="#000"/><path d="M834.5 320.5 H838.5 L840.5 322.5 V327.5 H834.5Z" fill="#fff" stroke="#000"/></svg>
<div class="a" style="left:909px;top:311px;width:56px;height:22px;background:#fff;border:1px solid #7a7a7a;"></div>
<div class="t" style="left:912.99px;top:317.66px;font-family:'Liberation Sans',sans-serif;font-size:10.17px;color:#111;font-weight:normal;line-height:1;">100%</div>
<div class="a" style="left:946px;top:313px;width:17px;height:18px;background:#e6e6e6;border:1px solid #c4c4c4;"></div>
<svg class="a" style="left:950px;top:319px" width="9" height="6"><path d="M1 1 L4.5 4.5 L8 1" fill="none" stroke="#505050" stroke-width="1.8"/></svg>
<svg class="a" style="left:975px;top:313px" width="17" height="16" viewBox="0 0 17 16"><path d="M1.5 10.5 V0.5 H9.5 V10.5" fill="#fff" stroke="#000" stroke-width="1.1"/><path d="M0.5 10.5 H13" stroke="#000" stroke-width="1.1"/><path d="M1.5 0.8 L5.6 3 V15 L1.5 11.5Z" fill="#9c9c12" stroke="#000" stroke-width="1.1"/><path d="M10.5 5 L14 1.8 V4 H16.3 V6.8 H14 V8.8Z" fill="#0000b8"/></svg>
<svg class="a" style="left:1006px;top:314px" width="16" height="14" viewBox="0 0 16 14"><path d="M4.2 0.7 H14.3 L12.6 5.6 H2.5Z" fill="#fff" stroke="#000" stroke-width="1.3"/><path d="M5.3 2.4 H12.2 M4.6 4.0 H11.6" stroke="#000" stroke-width="0.9"/><rect x="0.7" y="5.6" width="14.6" height="7.7" rx="2.2" fill="#d8d8d8" stroke="#000" stroke-width="1.3"/><path d="M1 8.3 H15 M1 10.9 H15" stroke="#000" stroke-width="1.2"/><path d="M3 9.6 H13" stroke="#9a9a9a" stroke-width="1.2"/></svg>
</body></html>
